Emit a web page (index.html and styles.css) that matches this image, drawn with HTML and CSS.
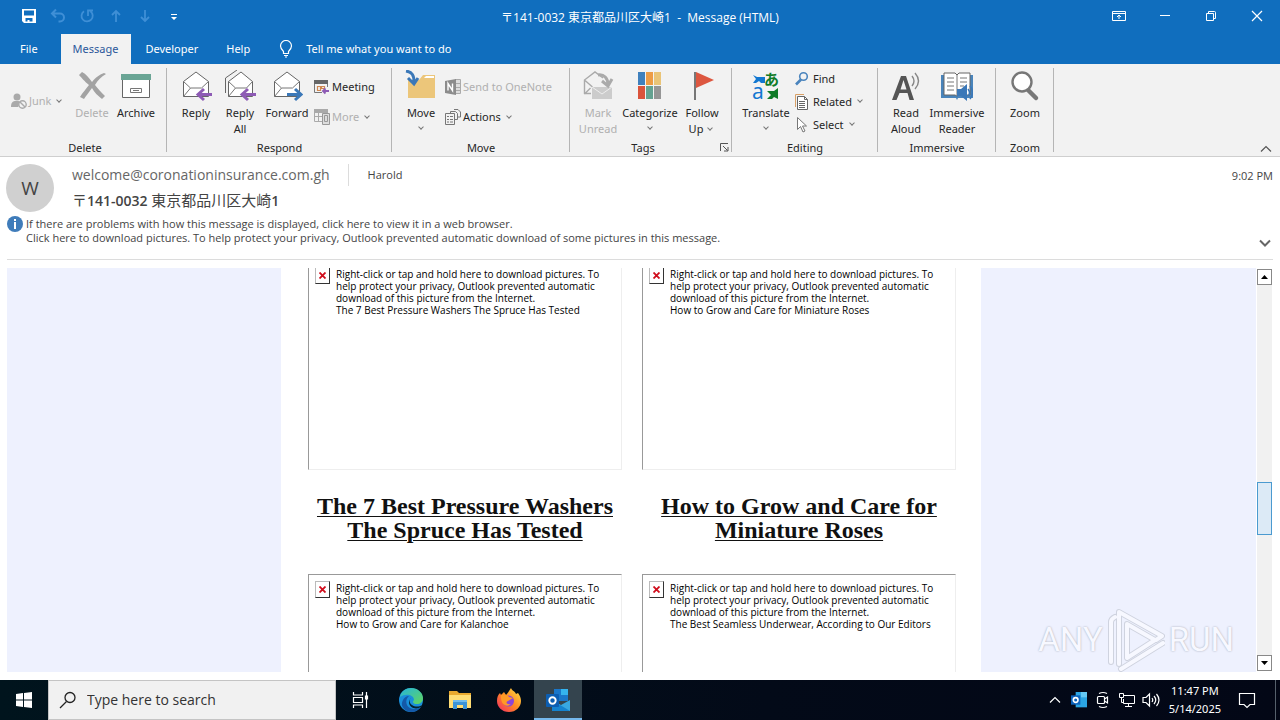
FILE: index.html
```html
<!DOCTYPE html>
<html lang="en">
<head>
<meta charset="utf-8">
<title>〒141-0032 東京都品川区大崎1 - Message (HTML)</title>
<link rel="stylesheet" href="styles.css">
</head>
<body>
<header class="titlebar">
  <div class="quick">
    <button aria-label="Save"><svg width="16" height="16" viewBox="0 0 16 16"><path d="M1 1h14v14H3l-2-2zM3 2.500v5h10v-5zM4.500 10v3.500h2V12h2v1.500h3V10z" fill="#fff" fill-rule="evenodd"/></svg></button>
    <button aria-label="Undo"><svg width="16" height="16" viewBox="0 0 16 16" fill="none" stroke="#3f8fd6" stroke-width="2"><path d="M6 1.500L2 5.500l4 4M2.500 5.500h7.500a4 4 0 0 1 0 8H8.500"/></svg></button>
    <button aria-label="Redo"><svg width="16" height="16" viewBox="0 0 16 16" fill="none" stroke="#3f8fd6" stroke-width="1.800"><path d="M5 3.200A5.600 5.600 0 1 0 11.500 3.400M9 8V2.500h5"/></svg></button>
    <button aria-label="Previous item"><svg width="16" height="16" viewBox="0 0 16 16" fill="none" stroke="#3f8fd6" stroke-width="1.800"><path d="M8 14V3M4 7l4-4 4 4"/></svg></button>
    <button aria-label="Next item"><svg width="16" height="16" viewBox="0 0 16 16" fill="none" stroke="#3f8fd6" stroke-width="1.800"><path d="M8 2v11M4 9l4 4 4-4"/></svg></button>
    <button aria-label="Customize toolbar"><svg width="16" height="16" viewBox="0 0 16 16"><path d="M5 6h6v1H5zM5 9h6l-3 3z" fill="#fff"/></svg></button>
  </div>
  <h1 class="window-title">〒141-0032 東京都品川区大崎1&nbsp; -&nbsp; Message (HTML)</h1>
  <div class="window-controls">
    <button aria-label="Ribbon display options"><svg width="14" height="12" viewBox="0 0 14 12" fill="none" stroke="#fff"><path d="M.5 1.500h13v9H.5zM.5 3.500h13M7 9V5M5 7l2-2 2 2"/></svg></button>
    <button aria-label="Minimize"><svg width="12" height="12" viewBox="0 0 12 12" stroke="#fff"><path d="M1 5.500h10"/></svg></button>
    <button aria-label="Restore"><svg width="12" height="12" viewBox="0 0 12 12" fill="none" stroke="#fff"><path d="M1.500 3.500h7v7h-7zM3.500 3V1.500h6a1 1 0 0 1 1 1v6H9"/></svg></button>
    <button aria-label="Close"><svg width="12" height="12" viewBox="0 0 12 12" stroke="#fff" stroke-width="1.200"><path d="M1 1l10 10M11 1L1 11"/></svg></button>
  </div>
</header>

<nav class="tabs">
  <button class="tab">File</button>
  <button class="tab tab-active">Message</button>
  <button class="tab">Developer</button>
  <button class="tab">Help</button>
  <button class="tell"><svg width="14" height="18" viewBox="0 0 14 18" fill="none" stroke="#fff" stroke-width="1.200"><path d="M4.500 13.500v-2C3 10 1.500 8.500 1.500 6a5.500 5.500 0 0 1 11 0c0 2.500-1.500 4-3 5.500v2zM5 15.500h4M6 17h2"/></svg>Tell me what you want to do</button>
</nav>

<section class="ribbon">
  <div class="group group-delete">
    <div class="tools">
      <div class="stack stack-one"><button class="small off"><svg width="18" height="18" viewBox="0 0 18 18"><circle cx="7" cy="5" r="3.500" fill="#aaa"/><path d="M1 15c0-6 3-6 6-6 2 0 3 0 4 1l-3 5z" fill="#aaa"/><circle cx="12.500" cy="12.500" r="3.700" fill="#f2f2f2" stroke="#aaa" stroke-width="1.400"/><path d="M10 10l5 5" stroke="#aaa" stroke-width="1.400"/></svg>Junk<i class="caret"></i></button></div>
      <button class="big w40 off"><svg width="32" height="32" viewBox="0 0 32 32"><path d="M3 5l3-3c4 2 7 6 10 10 4-5 7-7 12-9l2 1c-5 3-8 6-11 11 3 4 6 7 10 11l-3 3c-4-3-8-7-10-11-3 4-6 8-8 11l-4-2c3-5 6-8 9-12C8 11 6 8 3 5z" fill="#a3a3a3"/></svg>Delete</button>
      <button class="big w48"><svg width="32" height="32" viewBox="0 0 32 32"><path d="M2.500 9.500h27v18h-27z" fill="#fff" stroke="#666"/><path d="M1 4h30v6H1z" fill="#6aa595"/><path d="M10.500 18.500h11v4h-11zM13 20.500h6" fill="none" stroke="#777"/></svg>Archive</button>
    </div>
    <h2>Delete</h2>
  </div>
  <div class="group group-respond">
    <div class="tools">
      <button class="big w44"><svg width="32" height="32" viewBox="0 0 32 32"><path d="M3.500 26.500v-15L16 2l12.500 9.500v15z" fill="#fff" stroke="#666"/><path d="M3.500 11.500l7 6.500h11l7-6.500M3.500 26.500l7-8.500" fill="none" stroke="#777"/><path d="M32 24.500H18M24 19l-6 5.500 6 5.500" fill="none" stroke="#8e5bb5" stroke-width="3"/></svg>Reply</button>
      <button class="big w44"><svg width="32" height="32" viewBox="0 0 32 32"><path d="M1.500 23V8L13 0" fill="none" stroke="#666"/><path d="M4.500 26.500v-15L17 2l11.500 9.500v15z" fill="#fff" stroke="#666"/><path d="M4.500 11.500l7 6.500h11l6-6.500M4.500 26.500l7-8.500" fill="none" stroke="#777"/><path d="M32 24.500H18M24 19l-6 5.500 6 5.500" fill="none" stroke="#8e5bb5" stroke-width="3"/></svg>Reply<br>All</button>
      <button class="big w50"><svg width="32" height="32" viewBox="0 0 32 32"><path d="M3.500 26.500v-15L16 2l12.500 9.500v15z" fill="#fff" stroke="#666"/><path d="M3.500 11.500l7 6.500h11l7-6.500M3.500 26.500l7-8.500" fill="none" stroke="#777"/><path d="M16 24.500h14M24 19l6 5.500-6 5.500" fill="none" stroke="#3b78b8" stroke-width="3"/></svg>Forward</button>
      <div class="stack">
        <button class="small"><svg width="18" height="18" viewBox="0 0 18 18"><path d="M1.500 4v10.500H9M14.500 4v5" fill="none" stroke="#777"/><path d="M1 2h14v4H1z" fill="#666"/><path d="M4.500 8.500h3v4h-3zM8.500 8.500h3v2h-3z" fill="none" stroke="#d08750" stroke-width="1.200"/><path d="M16 13h-6M12.500 10.500L10 13l2.500 2.500" fill="none" stroke="#8e5bb5" stroke-width="1.800"/></svg>Meeting</button>
        <button class="small off"><svg width="18" height="18" viewBox="0 0 18 18"><path d="M1.500 3v10.500H9M1.500 8.500H9M5.500 5v8M14.500 3v2" fill="none" stroke="#aaa"/><path d="M1 1h14v4H1z" fill="#aaa"/><path d="M9.500 5.500h7v11h-7zM11.500 7.500h3v6h-3z" fill="#ddd" stroke="#999"/></svg>More<i class="caret"></i></button>
      </div>
    </div>
    <h2>Respond</h2>
  </div>
  <div class="group group-move">
    <div class="tools">
      <button class="big w44"><svg width="32" height="32" viewBox="0 0 32 32"><path d="M3 28V10h11l4-5h12v23z" fill="#ecc67a"/><path d="M19 8l2-2h8v2z" fill="#fff"/><path d="M1 1c6 1 8 4 8 11M3 8l6 6 4-6" fill="none" stroke="#3b78b8" stroke-width="3"/></svg>Move<i class="caret"></i></button>
      <div class="stack">
        <button class="small off"><svg width="18" height="18" viewBox="0 0 18 18"><path d="M11 1.500h5.500v14H11M12 5.500h4M12 9.500h4M12 12.500h4" fill="#ddd" stroke="#aaa"/><path d="M1 3l11-2v16L1 15z" fill="#8c8c8c"/><path d="M4 12.500V5.500l4.500 7v-7" fill="none" stroke="#fff" stroke-width="1.400"/></svg>Send to OneNote</button>
        <button class="small"><svg width="18" height="18" viewBox="0 0 18 18" fill="none" stroke="#777"><path d="M1.500 5.500h9v11h-9zM3 8.500h2M6 8.500h3M3 11.500h2M6 11.500h3M3 14h2M6 14h3M6.500 5V3.500h5l2 2v6H11M10 1.500h4l2.500 2.500v5H14"/></svg>Actions<i class="caret"></i></button>
      </div>
    </div>
    <h2>Move</h2>
  </div>
  <div class="group group-tags">
    <div class="tools">
      <button class="big w42 off"><svg width="32" height="32" viewBox="0 0 32 32"><path d="M2.500 24V10L13 2l8 6M2.500 10l8 7M2.500 24l6-6M2 23.500h7" fill="none" stroke="#aaa" stroke-width="1.400"/><path d="M10 17h20v12H10z" fill="#ccc"/><path d="M10 17l10 7 10-7" fill="none" stroke="#eee"/><path d="M16 5c6-1 10 3 10 10M20 11l6 5 4-7" fill="none" stroke="#aaa" stroke-width="3"/></svg>Mark<br>Unread</button>
      <button class="big w62"><svg width="32" height="32" viewBox="0 0 32 32"><path d="M4 2h7v13H4z" fill="#3f80bd"/><path d="M12 2h7v13h-7z" fill="#ed9c45"/><path d="M20 2h7v13h-7z" fill="#eac477"/><path d="M4 16h7v13H4z" fill="#da533b"/><path d="M12 16h7v13h-7z" fill="#64a291"/><path d="M20 16h7v13h-7z" fill="#969696"/></svg>Categorize<i class="caret"></i></button>
      <button class="big w42"><svg width="32" height="32" viewBox="0 0 32 32"><path d="M8 2h2v28H8z" fill="#777"/><path d="M10 2l18 8-18 8z" fill="#dd5740"/></svg>Follow<span>Up<i class="caret"></i></span></button>
    </div>
    <h2>Tags</h2>
    <button class="launcher" aria-label="Tags options"><svg width="9" height="9" viewBox="0 0 9 9" fill="none" stroke="#555"><path d="M.5 8V.5H8M3 3l4.500 4.500M8 4v4H4"/></svg></button>
  </div>
  <div class="group group-editing">
    <div class="tools">
      <button class="big w54"><svg width="32" height="32" viewBox="0 0 32 32" overflow="visible"><path d="M3 5l4 2h8v6h-4l-2-2-3 2H3l3-4z" fill="#1177d1"/><path d="M28 18v11l-4-2-2 2h-5l4-4-4-4h7z" fill="#107c28"/><text x="2" y="29" font-size="21" fill="#1177d1">a</text><text x="14" y="15" font-size="15" font-weight="700" fill="#107c28">あ</text></svg>Translate<i class="caret"></i></button>
      <div class="stack stack-tight">
        <button class="small"><svg width="18" height="18" viewBox="0 0 18 18" fill="none" stroke="#4a84bd"><circle cx="9.500" cy="6.500" r="3.800" stroke-width="1.600"/><path d="M7 9.500l-5 5" stroke-width="2.600"/></svg>Find</button>
        <button class="small"><svg width="18" height="18" viewBox="0 0 18 18"><path d="M1.500 14V1.500H10" fill="none" stroke="#d9a066"/><path d="M3.500 3.500h7l3 3v10h-10z" fill="#fff" stroke="#666"/><path d="M10.500 3.500v3h3M5 8.500h6M5 10.500h6M5 12.500h6M5 14.500h6" fill="none" stroke="#666"/></svg>Related<i class="caret"></i></button>
        <button class="small"><svg width="18" height="18" viewBox="0 0 18 18"><path d="M3.500 1.500v12l3-3 2.500 5.500 2-1-2.500-5h4z" fill="#fff" stroke="#777"/></svg>Select<i class="caret"></i></button>
      </div>
    </div>
    <h2>Editing</h2>
  </div>
  <div class="group group-immersive">
    <div class="tools">
      <button class="big w42"><svg width="32" height="32" viewBox="0 0 32 32"><path d="M2 30L11 6h5l8 24h-4.500l-2-7h-8L6.500 30zM10.500 19.500h6L13.500 10z" fill="#555" fill-rule="evenodd"/><path d="M22 6q4 5 0 10M25 3q7 8 0 16" fill="none" stroke="#888" stroke-width="1.400"/></svg>Read<br>Aloud</button>
      <button class="big w60"><svg width="32" height="32" viewBox="0 0 32 32"><path d="M0 5h32v23H17l-1 2-1-2H0z" fill="#4984bb"/><path d="M3 3h11l2 2 2-2h11v22H18l-2 1-2-1H3z" fill="#fff" stroke="#666"/><path d="M16 5v20M6 8h7M6 12h7M6 16h7M6 20h7M19 8h7M19 12h7M19 16h4" stroke="#777"/><path d="M16 19h4l6-5v17l-6-5h-4z" fill="#3b78b8"/><path d="M27 19q3 4 0 7M29 16q5 6 0 13" fill="none" stroke="#3b78b8" stroke-width="1.500"/></svg>Immersive<br>Reader</button>
    </div>
    <h2>Immersive</h2>
  </div>
  <div class="group group-zoom">
    <div class="tools">
      <button class="big w44"><svg width="32" height="32" viewBox="0 0 32 32"><path d="M19 20l8 8" stroke="#777" stroke-width="4.500" stroke-linecap="round"/><circle cx="13" cy="12" r="9.500" fill="#fff" stroke="#777" stroke-width="2.400"/></svg>Zoom</button>
    </div>
    <h2>Zoom</h2>
  </div>
  <button class="collapse" aria-label="Collapse the ribbon"><svg width="12" height="8" viewBox="0 0 12 8" fill="none" stroke="#555" stroke-width="1.200"><path d="M1 6.500l5-5 5 5"/></svg></button>
</section>

<section class="message-head">
  <div class="sender-row">
    <div class="avatar">W</div>
    <div class="sender">
      <div class="from-line"><span class="from">welcome@coronationinsurance.com.gh</span><span class="to">Harold</span></div>
      <h2 class="subject"><span class="kanji">〒</span>141-0032 <span class="kanji">東京都品川区大崎</span>1</h2>
    </div>
    <time>9:02 PM</time>
  </div>
  <div class="info">
    <svg width="16" height="16" viewBox="0 0 16 16"><circle cx="8" cy="8" r="8" fill="#3f7cba"/><path d="M7 3h2v2H7zM7 6h2v7H7z" fill="#fff"/></svg>
    <p>If there are problems with how this message is displayed, click here to view it in a web browser.<br>Click here to download pictures. To help protect your privacy, Outlook prevented automatic download of some pictures in this message.</p>
    <button class="expand" aria-label="Expand header"><svg width="12" height="8" viewBox="0 0 12 8" fill="none" stroke="#666" stroke-width="2"><path d="M1 1.500l5 5 5-5"/></svg></button>
  </div>
</section>

<main class="reader">
  <div class="mail">
    <div class="cards">
      <article>
        <div class="picture"><span class="missing"><svg width="7" height="7" viewBox="0 0 7 7" stroke="#d00d1c" stroke-width="1.800"><path d="M.5.5l6 6M6.500.5l-6 6"/></svg></span><p>Right-click or tap and hold here to download pictures. To help protect your privacy, Outlook prevented automatic download of this picture from the Internet.<br>The 7 Best Pressure Washers The Spruce Has Tested</p></div>
        <h3><a href="#">The 7 Best Pressure Washers<br>The Spruce Has Tested</a></h3>
      </article>
      <article>
        <div class="picture"><span class="missing"><svg width="7" height="7" viewBox="0 0 7 7" stroke="#d00d1c" stroke-width="1.800"><path d="M.5.5l6 6M6.500.5l-6 6"/></svg></span><p>Right-click or tap and hold here to download pictures. To help protect your privacy, Outlook prevented automatic download of this picture from the Internet.<br>How to Grow and Care for Miniature Roses</p></div>
        <h3><a href="#">How to Grow and Care for<br>Miniature Roses</a></h3>
      </article>
      <article>
        <div class="picture"><span class="missing"><svg width="7" height="7" viewBox="0 0 7 7" stroke="#d00d1c" stroke-width="1.800"><path d="M.5.5l6 6M6.500.5l-6 6"/></svg></span><p>Right-click or tap and hold here to download pictures. To help protect your privacy, Outlook prevented automatic download of this picture from the Internet.<br>How to Grow and Care for Kalanchoe</p></div>
      </article>
      <article>
        <div class="picture"><span class="missing"><svg width="7" height="7" viewBox="0 0 7 7" stroke="#d00d1c" stroke-width="1.800"><path d="M.5.5l6 6M6.500.5l-6 6"/></svg></span><p>Right-click or tap and hold here to download pictures. To help protect your privacy, Outlook prevented automatic download of this picture from the Internet.<br>The Best Seamless Underwear, According to Our Editors</p></div>
      </article>
    </div>
  </div>
  <div class="scrollbar">
    <button aria-label="Scroll up"><svg width="7" height="4" viewBox="0 0 7 4"><path d="M0 4l3.500-4L7 4z"/></svg></button>
    <div class="track"><div class="thumb"></div></div>
    <button aria-label="Scroll down"><svg width="7" height="4" viewBox="0 0 7 4"><path d="M0 0h7L3.500 4z"/></svg></button>
  </div>
  <div class="watermark"><span>ANY</span><svg width="58" height="64" viewBox="0 0 58 64" fill="none" stroke-linejoin="round" stroke-linecap="round"><g stroke="#cfd3df" stroke-width="6"><path d="M4 54V14q0-3 4-5M12 56V4l43 24-6 4M14 61l42-26M20 50V16l28 16z"/></g><g stroke="#f7f8ff" stroke-width="4"><path d="M4 54V14q0-3 4-5M12 56V4l43 24-6 4M14 61l42-26M20 50V16l28 16z"/></g></svg><span>RUN</span></div>
</main>

<footer class="taskbar">
  <button class="start" aria-label="Start"><svg width="16" height="16" viewBox="0 0 16 16" fill="#fff"><path d="M0 2l7-1v6.500H0zM8 1l8-1v7.500H8zM0 8.500h7V15l-7-1zM8 8.500h8V16l-8-1z"/></svg></button>
  <label class="search"><svg width="18" height="18" viewBox="0 0 18 18" fill="none" stroke="#222" stroke-width="1.300"><circle cx="11" cy="6.500" r="5"/><path d="M7.500 10.500L1 17"/></svg><input type="text" aria-label="Search" placeholder="Type here to search"></label>
  <div class="apps">
    <button aria-label="Task view"><svg width="18" height="18" viewBox="0 0 18 18" fill="none" stroke="#fff" stroke-width="1.200"><path d="M1.500 1v3h9V1M1.500 17v-3h9v3M1.500 6.500h9v5h-9zM14.500 1v16"/><path d="M13.500 5h2v3h-2z" fill="#fff"/></svg></button>
    <button aria-label="Edge"><svg width="24" height="24" viewBox="0 0 24 24"><defs><linearGradient id="eg" x1="0" y1="0" x2="1" y2="1"><stop offset="0" stop-color="#25b5dc"/><stop offset="1" stop-color="#62d65c"/></linearGradient></defs><circle cx="12" cy="12" r="12" fill="#1a8fdb"/><path d="M1 9C2 3 7 0 12 0c7 0 12 5 12 10 0 4-3 6-6 6-4 0-5-2-3-4C15 7 7 5 1 9z" fill="url(#eg)"/><path d="M10 8c-5 4-3 13 5 13 3 0 5-1 7-2-2 3-6 5-10 5C4 23 1 17 4 12c1-2 3-4 6-4z" fill="#1459a8"/><path d="M12 10c-2 1-2 5 1 7 3 2 7 2 10 0l-1 2c-5 3-12 1-12-5 0-2 1-3 2-4z" fill="#06212c"/></svg></button>
    <button aria-label="File Explorer"><svg width="22" height="20" viewBox="0 0 22 20"><path d="M0 1h8l2 2h12v15H0z" fill="#e9a92e"/><path d="M0 5h22v13H0z" fill="#ffdd74"/><path d="M4 19v-8h14v8h-4v-4H8v4z" fill="#3a93d7"/><path d="M4 10h14v2H4z" fill="#6fbbed"/></svg></button>
    <button aria-label="Firefox"><svg width="24" height="24" viewBox="0 0 24 24"><defs><linearGradient id="ff" x1="1" y1="0" x2="0" y2="1"><stop offset="0" stop-color="#ffe34a"/><stop offset=".5" stop-color="#ff8a21"/><stop offset="1" stop-color="#f0246b"/></linearGradient></defs><path d="M14 0c1 3 4 3 5 6l2-1c2 3 3 5 3 8 0 6-5 11-12 11S0 19 0 13c0-4 1-6 3-8l1 2 3-3 2 3c2-2 3-4 5-7z" fill="url(#ff)"/><circle cx="11.500" cy="13" r="5.500" fill="#8c45d8"/><path d="M4 7c4-1 7 0 8 2l4 1-5 3c-3 1-1 4 3 3-4 4-11 1-10-9z" fill="#ff9a26"/></svg></button>
    <button class="running" aria-label="Outlook"><svg width="24" height="24" viewBox="0 0 24 24"><path d="M8 1h14v12H8z" fill="#1a77ca"/><path d="M15 1h7v6h-7z" fill="#35b4ee"/><path d="M6 12l9 5 9-5v11H6z" fill="#38a8e2"/><path d="M6 12l18 11H6z" fill="#1583d0"/><rect x="0" y="6" width="13" height="13" rx="1" fill="#0c5eb2"/><circle cx="6.500" cy="12.500" r="3.200" fill="none" stroke="#fff" stroke-width="1.900"/></svg></button>
  </div>
  <div class="tray">
    <button aria-label="Show hidden icons"><svg width="12" height="8" viewBox="0 0 12 8" fill="none" stroke="#fff" stroke-width="1.200"><path d="M1 6.500l5-5 5 5"/></svg></button>
    <button aria-label="Outlook status"><svg width="16" height="16" viewBox="0 0 24 24"><path d="M7 0h17v23H7z" fill="#2ba5e3"/><path d="M15 0h9v8h-9z" fill="#64c9f5"/><rect x="0" y="5" width="14" height="14" fill="#0b62bb"/><circle cx="7" cy="12" r="3.500" fill="none" stroke="#fff" stroke-width="2.400"/></svg></button>
    <button aria-label="Meet now"><svg width="16" height="18" viewBox="0 0 16 18" fill="none" stroke="#fff" stroke-width="1.200"><rect x="2.500" y="5.500" width="7" height="7" rx="1"/><path d="M9.500 8l3-2v6l-3-2M4 2.500q4-2 8 0M4 15.500q4 2 8 0"/></svg></button>
    <button aria-label="Network"><svg width="18" height="16" viewBox="0 0 18 16" fill="none" stroke="#fff"><path d="M6 3.500h10.500v8H5.500V7M7 14.500h7M10.500 11.500v3M1.500 1.500h4v4h-4zM3.500 5.500v5h2"/></svg></button>
    <button aria-label="Volume"><svg width="18" height="16" viewBox="0 0 18 16" fill="none" stroke="#fff" stroke-width="1.200"><path d="M1 5.500h3l3.500-3.500v12L4 10.500H1zM10 6q1.500 2 0 4M12 4q3.500 4 0 8M14.500 2q5 6 0 12"/></svg></button>
    <div class="clock"><span>11:47 PM</span><span>5/14/2025</span></div>
    <button class="notify" aria-label="Notifications"><svg width="18" height="18" viewBox="0 0 18 18" fill="none" stroke="#fff" stroke-width="1.200"><path d="M1.500 2.500h15v11H12l-3 3-3-3H1.500z"/></svg></button>
    <div class="desktop-edge"></div>
  </div>
</footer>
</body>
</html>
```
FILE: styles.css
```css
* { box-sizing: border-box; }
body {
  margin: 0;
  height: 100vh;
  display: flex;
  flex-direction: column;
  overflow: hidden;
  background: #fff;
  color: #262626;
  font: 11px/16px "Noto Sans", "Noto Sans CJK JP", sans-serif;
}
button {
  border: 0;
  margin: 0;
  padding: 0;
  background: none;
  color: inherit;
  font: inherit;
  display: flex;
  align-items: center;
  justify-content: center;
}
h1, h2, h3, p { margin: 0; font: inherit; }
svg { flex: none; }

/* Title bar */
.titlebar {
  display: grid;
  grid-template-columns: 1fr auto 1fr;
  align-items: center;
  height: 32px;
  flex: none;
  background: #106ebe;
  color: #fff;
}
.quick { display: flex; padding-left: 14px; }
.quick button { width: 29px; height: 32px; }
.window-title { font-family: "Open Sans", "Noto Sans CJK JP", sans-serif; font-size: 12px; padding-top: 4px; }
.window-controls { display: flex; justify-content: flex-end; }
.window-controls button { width: 46px; height: 30px; }

/* Tabs */
.tabs { display: flex; height: 32px; flex: none; background: #106ebe; color: #fff; padding: 2px 0 0 6px; }
.tab { padding: 0 14px; }
.tab:first-child { margin-right: 9px; }
.tab-active { background: #f2f2f2; color: #2b579a; padding: 0 13px 0 12px; }
.tell { gap: 13px; margin-left: 15px; }

/* Ribbon */
.ribbon { display: flex; flex: none; height: 93px; background: #f2f2f2; border-bottom: 1px solid #cfcfcf; }
.group { display: flex; flex-direction: column; justify-content: space-between; position: relative; padding: 6px 7px 0; }
.group::after { content: ""; position: absolute; right: 0; top: 4px; bottom: 4px; border-right: 1px solid #b5b5b5; }
.group-delete { width: 167px; padding-left: 10px; }
.group-respond { width: 225px; }
.group-move { width: 178px; }
.group-tags { width: 162px; }
.group-editing { width: 146px; }
.group-immersive { width: 118px; }
.group-zoom { width: 58px; }
.group h2 { text-align: center; }
.group-tags h2 { padding-right: 16px; }
.tools { display: flex; }
.big { flex: none; flex-direction: column; justify-content: flex-start; text-align: center; white-space: nowrap; }
.big svg { margin-bottom: 3px; }
.big > .caret { margin: 4px 0; }
.w40 { width: 40px; }
.w42 { width: 42px; }
.w44 { width: 44px; }
.w48 { width: 48px; }
.w50 { width: 50px; }
.w54 { width: 54px; }
.w60 { width: 60px; }
.w62 { width: 62px; }
.stack { display: flex; flex-direction: column; padding: 2px 0 0 1px; }
.stack .small { height: 30px; }
.stack-one { width: 62px; padding: 16px 0 0; }
.stack-tight { padding-top: 0; margin-top: -3px; }
.stack-tight .small { height: 23px; }
.small { gap: 1px; justify-content: flex-start; white-space: nowrap; }
.off { color: #b0b0b0; }
.caret {
  display: inline-block;
  width: 4px;
  height: 4px;
  margin: 0 3px 3px 5px;
  border: solid #777;
  border-width: 0 1px 1px 0;
  transform: rotate(45deg);
}
.launcher { position: absolute; right: 3px; bottom: 4px; }
.collapse { margin-left: auto; align-self: flex-end; padding: 0 8px 3px 0; }

/* Message header */
.message-head { flex: none; margin: 0 7px; padding-top: 7px; border-bottom: 1px solid #dcdcdc; color: #444; font-family: "Open Sans", sans-serif; }
.sender-row { display: flex; }
.avatar { width: 48px; height: 48px; margin: 0 18px 0 -1px; border-radius: 50%; background: #d0d0d0; font-size: 19px; line-height: 48px; text-align: center; }
.sender { flex: 1; }
.from-line { display: flex; align-items: center; height: 22px; }
.from { font-size: 14px; color: #666; }
.to { border-left: 1px solid #dcdcdc; margin-left: 18px; padding: 3px 0 3px 19px; }
.subject { font-size: 14px; line-height: 20px; font-weight: 600; margin-top: 4px; }
.kanji { font-family: "Noto Sans CJK JP", sans-serif; font-size: 15px; font-weight: 400; }
.message-head time { line-height: 24px; }
.info { display: flex; gap: 3px; margin-top: 4px; padding-bottom: 12px; line-height: 14px; }
.info p { flex: 1; padding: 1px 0 2px; }
.expand { align-self: flex-end; padding: 0 2px 0 0; }

/* Reading area */
.reader { display: flex; flex: 1; min-height: 0; margin: 8px 8px 8px 7px; position: relative; }
.mail { flex: 1; overflow: hidden; background: #eef1fe; display: flex; justify-content: center; padding-right: 1px; }
.cards {
  display: grid;
  grid-template-columns: 1fr 1fr;
  column-gap: 20px;
  width: 700px;
  align-content: start;
  margin-top: -8px;
  padding: 0 25px 0 27px;
  background: #fff;
  color: #000;
}
.picture { display: flex; gap: 6px; height: 210px; padding: 6px 16px 0 6px; border: 1px solid; border-color: #999 #eee #eee #999; }
.picture p { font: 10px/12px "Open Sans", sans-serif; padding-top: 1px; }
.missing { display: flex; flex: none; align-items: center; justify-content: center; width: 15px; height: 17px; border: 1px solid; border-color: #bbb #333 #333 #bbb; }
.cards h3 { padding: 24px 0 32px; text-align: center; font: 700 24px/24px "Liberation Serif", serif; white-space: nowrap; }
.cards a { color: #111; text-decoration-thickness: 1px; text-underline-offset: 2px; }
.scrollbar { display: flex; flex-direction: column; width: 16px; padding: 1px 0 1px 1px; background: #fff; }
.scrollbar button { height: 16px; border: 1px solid #888; background: #fff; }
.track { flex: 1; background: #f1f1f1; padding-top: 197px; }
.thumb { height: 53px; background: #dceaf6; border: 1px solid #4a9ad0; }
.watermark { position: absolute; right: 38px; bottom: 0; display: flex; align-items: center; gap: 4px; color: #f7f8ff; font: 33px/64px "Roboto", sans-serif; text-shadow: 0 0 2px #a0a4b0; }

/* Taskbar */
.taskbar { display: flex; flex: none; height: 40px; background: linear-gradient(90deg, #00141d, #030a18 60%, #030716); color: #fff; }
.start { width: 48px; }
.search { display: flex; align-items: center; gap: 10px; width: 288px; padding-left: 10px; background: #f1f1f1; border: 1px solid #c4c4c4; }
.search input { border: 0; padding: 0; width: 100%; background: none; color: #222; font: 14px/20px "Open Sans", sans-serif; outline: 0; }
.search input::placeholder { color: #333; opacity: 1; }
.apps { display: flex; gap: 1px; }
.apps button { width: 48px; }
.apps button:first-child { width: 50px; }
.apps .running { background: #34444e; box-shadow: inset 0 -2px #76b9ed; }
.tray { display: flex; margin-left: auto; }
.tray button { width: 24px; }
.clock { display: flex; flex-direction: column; align-items: center; justify-content: center; line-height: 18px; padding: 0 6px; }
.tray .notify { width: 40px; }
.desktop-edge { width: 5px; margin-left: 8px; border-left: 1px solid #56606c; }
```
